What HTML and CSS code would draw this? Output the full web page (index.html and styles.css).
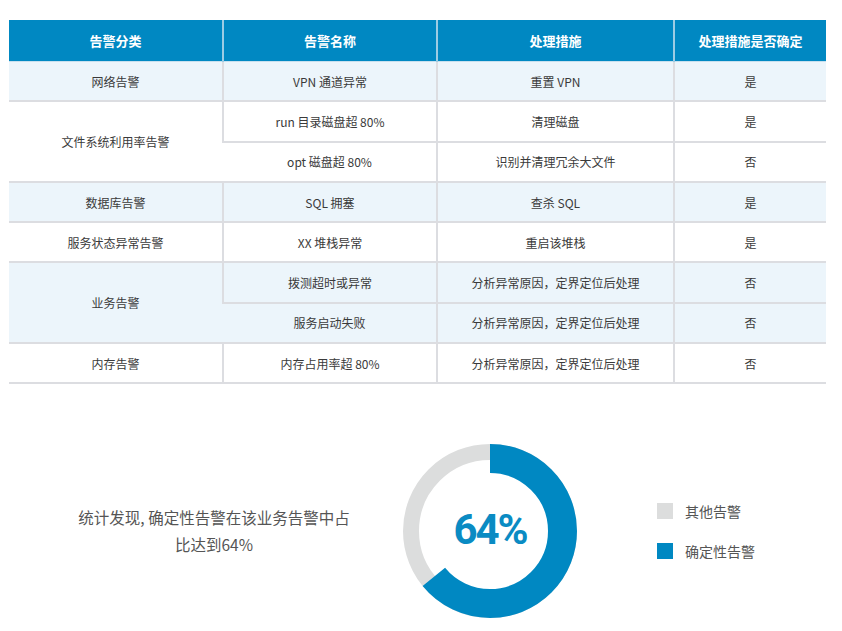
FILE: index.html
```html
<!DOCTYPE html>
<html lang="zh-CN">
<head>
<meta charset="utf-8">
<link rel="stylesheet" href="styles.css">
</head>
<body>
<div class="page">
  <table class="alarm-table">
    <colgroup>
      <col class="c1"><col class="c2"><col class="c3"><col class="c4">
    </colgroup>
    <thead>
      <tr><th>告警分类</th><th>告警名称</th><th>处理措施</th><th>处理措施是否确定</th></tr>
    </thead>
    <tbody>
      <tr class="tint"><td>网络告警</td><td>VPN 通道异常</td><td>重置 VPN</td><td>是</td></tr>
      <tr><td rowspan="2">文件系统利用率告警</td><td>run 目录磁盘超 80%</td><td>清理磁盘</td><td>是</td></tr>
      <tr><td>opt 磁盘超 80%</td><td>识别并清理冗余大文件</td><td>否</td></tr>
      <tr class="tint"><td>数据库告警</td><td>SQL 拥塞</td><td>查杀 SQL</td><td>是</td></tr>
      <tr><td>服务状态异常告警</td><td>XX 堆栈异常</td><td>重启该堆栈</td><td>是</td></tr>
      <tr class="tint"><td rowspan="2">业务告警</td><td>拨测超时或异常</td><td>分析异常原因，定界定位后处理</td><td>否</td></tr>
      <tr class="tint"><td>服务启动失败</td><td>分析异常原因，定界定位后处理</td><td>否</td></tr>
      <tr><td>内存告警</td><td>内存占用率超 80%</td><td>分析异常原因，定界定位后处理</td><td>否</td></tr>
    </tbody>
  </table>

  <section class="summary">
    <p class="summary-text">统计发现, 确定性告警在该业务告警中占<br>比达到64%</p>
    <div class="donut">
      <svg class="donut-svg" width="174" height="174" viewBox="0 0 174 174">
        <circle cx="87" cy="87" r="79" fill="none" stroke="#dcdddd" stroke-width="16"/>
        <circle cx="87" cy="87" r="72.5" fill="none" stroke="#0088c2" stroke-width="29"
                stroke-dasharray="291.5 1000" transform="rotate(-90 87 87)"/>
      </svg>
      <div class="donut-label">64%</div>
    </div>
    <ul class="legend">
      <li><span class="swatch grey"></span>其他告警</li>
      <li><span class="swatch blue"></span>确定性告警</li>
    </ul>
  </section>
</div>
</body>
</html>
```

FILE: styles.css
```css
html, body {
  margin: 0;
  padding: 0;
  background: #ffffff;
}

body {
  font-family: "Noto Sans CJK SC", "Noto Sans", sans-serif;
  color: #3a3a3a;
}

.page {
  padding: 20px 0 0 9px;
  width: 817px;
}

.alarm-table {
  width: 817px;
  border-collapse: collapse;
  table-layout: fixed;
  font-size: 12px;
}

.c1 { width: 214px; }
.c2 { width: 214px; }
.c3 { width: 237px; }
.c4 { width: 152px; }

.alarm-table th {
  height: 41px;
  padding: 0;
  background: #0088c2;
  color: #ffffff;
  font-size: 13px;
  font-weight: bold;
  text-align: center;
  border-left: 2px solid #9ccce4;
  border-bottom: 1px solid #c8e0ee;
}

.alarm-table th:first-child {
  border-left: none;
}

.alarm-table td {
  height: 38.3px;
  padding: 0;
  text-align: center;
  vertical-align: middle;
  border-left: 2px solid #dcdde1;
  border-bottom: 2px solid #dcdde1;
  color: #3a3a3a;
}

.alarm-table tr td:first-child {
  border-left: none;
}

.alarm-table td[rowspan] {
  border-left: none;
}

.alarm-table tr.tint td {
  background: #ecf5fb;
}

.summary {
  display: flex;
  align-items: center;
  margin-top: 60px;
  height: 174px;
}

.summary-text {
  flex: 0 0 378px;
  margin: 0;
  padding-left: 16px;
  text-align: center;
  font-size: 15.5px;
  line-height: 27px;
  color: #555555;
}

.donut {
  flex: 0 0 174px;
  display: grid;
  width: 174px;
  height: 174px;
}

.donut-svg,
.donut-label {
  grid-area: 1 / 1;
}

.donut-label {
  align-self: center;
  justify-self: center;
  font-family: Roboto, "Noto Sans", sans-serif;
  font-weight: bold;
  font-size: 42px;
  letter-spacing: -2px;
  color: #0a8bc3;
  line-height: 1;
  padding-bottom: 2px;
}

.legend {
  list-style: none;
  margin: 0 0 0 80px;
  padding: 0;
  display: flex;
  flex-direction: column;
  gap: 24px;
}

.legend li {
  display: flex;
  align-items: center;
  gap: 12px;
  font-size: 14px;
  line-height: 16px;
  color: #555555;
}

.swatch {
  width: 16px;
  height: 16px;
  display: inline-block;
}

.swatch.grey { background: #dcdddd; }
.swatch.blue { background: #0088c2; }
```
